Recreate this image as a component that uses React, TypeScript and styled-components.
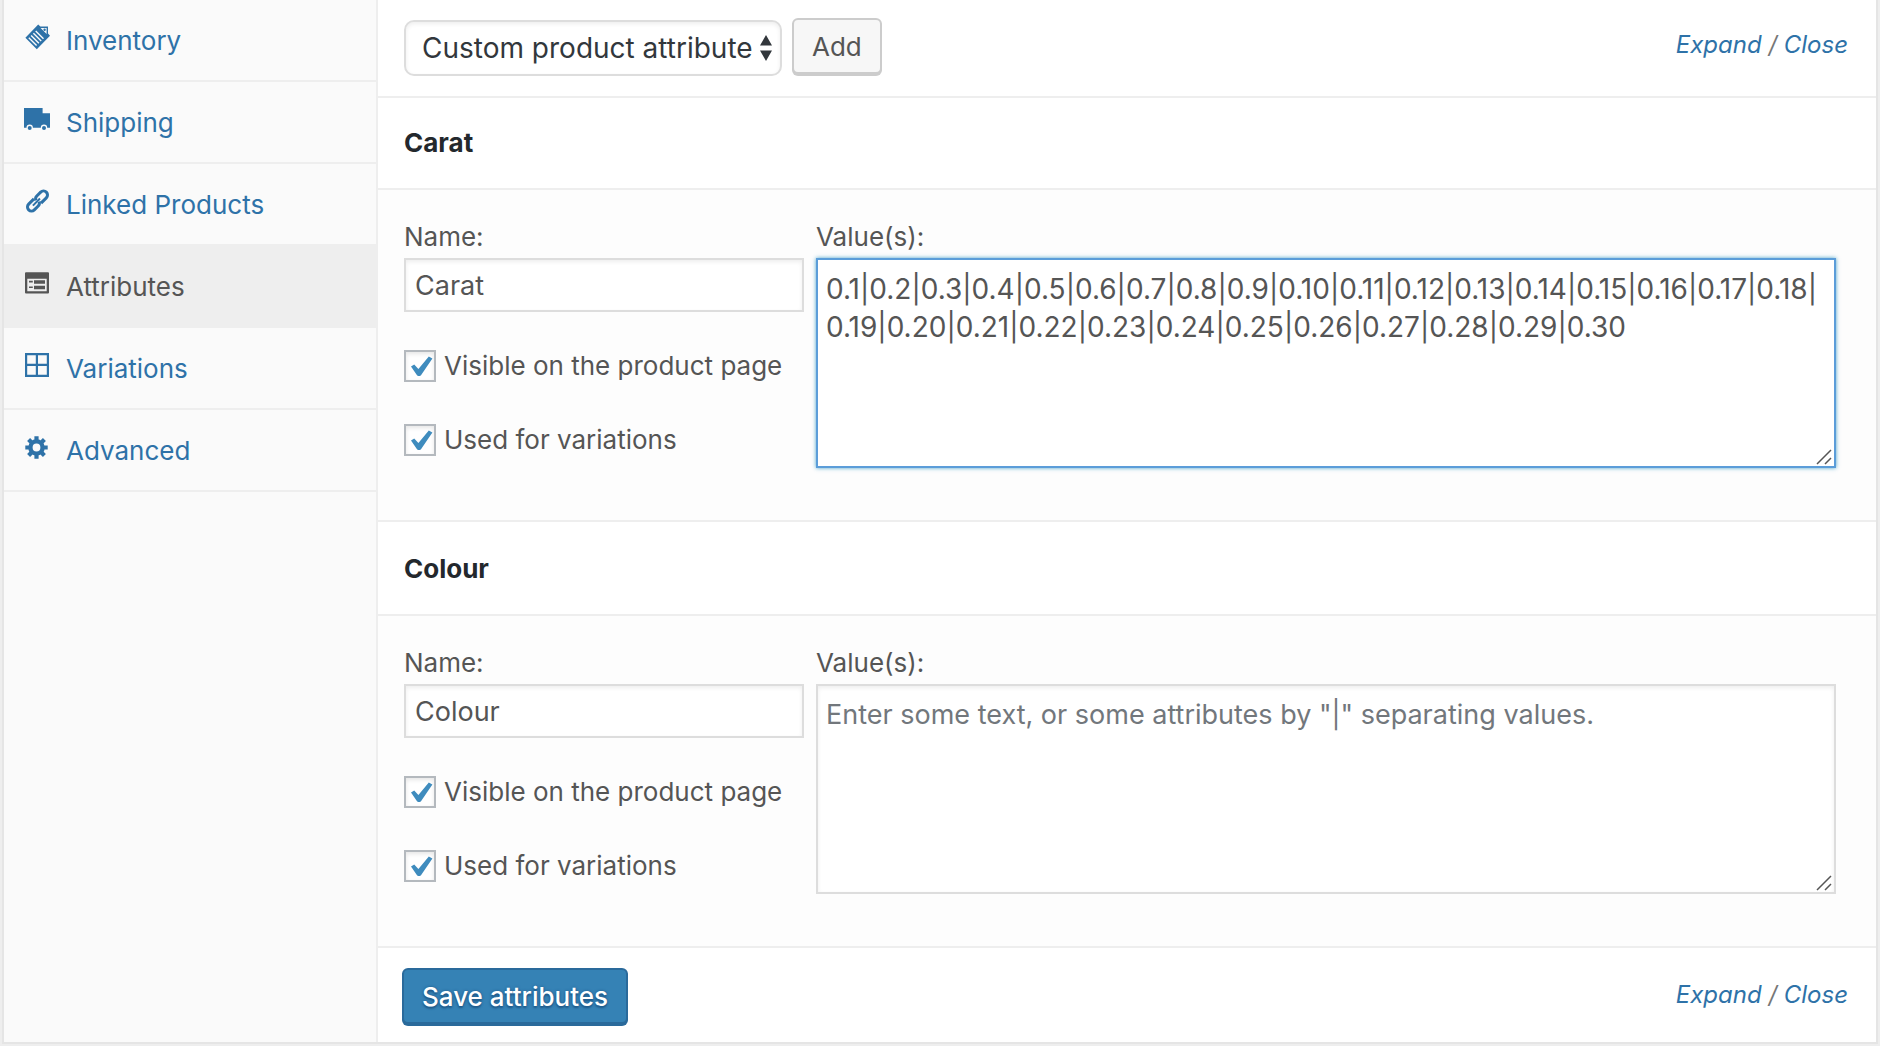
import React, { useId, useState } from 'react';
import styled, { createGlobalStyle } from 'styled-components';

const GlobalStyle = createGlobalStyle`
  *, *::before, *::after { box-sizing: border-box; }
  body {
    margin: 0;
    background: #eeeeee;
    color: #555555;
    font-family: Inter, "Liberation Sans", sans-serif;
    font-size: 26px;
  }
  h3, p, ul { margin: 0; padding: 0; }
`;

const Panel = styled.div`
  display: flex;
  margin: 0 2px 2px;
  border: solid #e5e5e5;
  border-width: 0 2px 2px;
  background: #ffffff;
`;

const Tabs = styled.nav`
  flex: 0 0 374px;
  background: #fafafa;
  border-right: 2px solid #eeeeee;
`;

const TabList = styled.ul`
  list-style: none;
`;

const Tab = styled.li<{ $active?: boolean }>`
  border-bottom: 2px solid #eeeeee;
  background: ${p => (p.$active ? '#eeeeee' : 'transparent')};
  margin-right: ${p => (p.$active ? '-2px' : '0')};
`;

const TabLink = styled.a<{ $active?: boolean }>`
  display: flex;
  align-items: center;
  gap: 16px;
  height: 80px;
  padding: 0 20px;
  color: ${p => (p.$active ? '#555555' : '#2e72a8')};
  text-decoration: none;
`;

const TabIcon = styled.svg`
  flex: none;
  width: 26px;
  height: 26px;
  margin-bottom: 6px;
  fill: currentColor;
`;

const Content = styled.main`
  flex: 1;
  min-width: 0;
`;

const Toolbar = styled.div`
  display: flex;
  align-items: center;
  gap: 10px;
  padding: 18px 28px 20px 26px;
`;

const TopBar = styled(Toolbar)`
  border-bottom: 2px solid #eeeeee;
`;

const BottomBar = styled(Toolbar)`
  padding: 20px 28px 16px 24px;
`;

const SelectBox = styled.div`
  position: relative;
  margin-top: 2px;
`;

const Select = styled.select`
  appearance: none;
  display: block;
  width: 378px;
  height: 56px;
  padding: 0 16px;
  border: 2px solid #dddddd;
  border-radius: 10px;
  background: #ffffff;
  box-shadow: inset 0 2px 4px rgba(0, 0, 0, 0.07);
  color: #32373c;
  font: inherit;
  font-size: 28px;
`;

const SelectArrows = styled.svg`
  position: absolute;
  top: 15px;
  right: 9px;
  width: 14px;
  height: 26px;
  fill: #32373c;
  pointer-events: none;
`;

const Button = styled.button<{ $primary?: boolean }>`
  height: 56px;
  margin-bottom: 2px;
  padding: 0 18px;
  border: 2px solid ${p => (p.$primary ? '#2a6a9b' : '#cccccc')};
  border-radius: 6px;
  background: ${p => (p.$primary ? '#3582b5' : '#f7f7f7')};
  box-shadow: 0 2px 0 ${p => (p.$primary ? '#2a6a9b' : '#cccccc')};
  color: ${p => (p.$primary ? '#ffffff' : '#555555')};
  font: inherit;
  font-weight: ${p => (p.$primary ? 500 : 400)};
  text-shadow: ${p => (p.$primary ? '0 0 3px #1f5a8a, 0 2px 2px #1f5a8a' : 'none')};
`;

const Toggle = styled.p`
  margin: 0 0 4px auto;
  font-size: 24px;
  font-style: italic;
  line-height: 32px;
  color: #777777;
`;

const ToggleLink = styled.a`
  color: #2e72a8;
  text-decoration: none;
`;

const Attribute = styled.section`
  border-bottom: 2px solid #eeeeee;
  & + & { padding-top: 2px; }
`;

const AttributeTitle = styled.h3`
  padding: 0 26px;
  border-bottom: 2px solid #eeeeee;
  color: #23282d;
  font-size: 26px;
  font-weight: 700;
  line-height: 90px;
`;

const AttributeBody = styled.div`
  display: grid;
  grid-template-columns: minmax(0, 20fr) minmax(0, 51fr);
  column-gap: 12px;
  padding: 26px 40px 52px 26px;
  background: #fdfdfd;
`;

const Label = styled.label`
  display: block;
  line-height: 42px;
`;

const TextInput = styled.input`
  display: block;
  width: 100%;
  height: 54px;
  padding: 0 9px;
  border: 2px solid #dddddd;
  background: #ffffff;
  box-shadow: inset 0 2px 4px rgba(0, 0, 0, 0.07);
  color: #555555;
  font: inherit;
  font-size: 27px;
`;

const Checks = styled.div`
  display: grid;
  gap: 38px;
  padding-top: 36px;
`;

const CheckRow = styled.div`
  display: flex;
  align-items: center;
  gap: 8px;
  line-height: 36px;
`;

const CheckBox = styled.span`
  position: relative;
  flex: none;
  width: 32px;
  height: 32px;
`;

const CheckInput = styled.input`
  appearance: none;
  display: block;
  width: 32px;
  height: 32px;
  margin: 0;
  border: 2px solid #b4b9be;
  background: #ffffff;
  box-shadow: inset 0 2px 4px rgba(0, 0, 0, 0.1);
`;

const CheckMark = styled.svg`
  position: absolute;
  inset: 0;
  fill: #3f8cbe;
  pointer-events: none;
`;

const AreaBox = styled.div`
  position: relative;
`;

const TextArea = styled.textarea<{ $active?: boolean }>`
  display: block;
  width: 100%;
  height: 210px;
  padding: 10px 8px;
  overflow: hidden;
  resize: none;
  border: 2px solid ${p => (p.$active ? '#5b9dd9' : '#dddddd')};
  background: #ffffff;
  box-shadow: ${p => (p.$active ? '0 0 4px rgba(30, 140, 190, 0.8)' : 'inset 0 2px 4px rgba(0, 0, 0, 0.07)')};
  color: #555555;
  font: inherit;
  font-size: 28px;
  line-height: 38px;
  &::placeholder { color: #72777c; font-size: 27px; opacity: 1; }
`;

const Grip = styled.svg`
  position: absolute;
  right: 4px;
  bottom: 3px;
  width: 16px;
  height: 16px;
  fill: none;
  stroke: #555555;
  stroke-width: 1.5;
  pointer-events: none;
`;

const icons: Record<string, React.ReactNode> = {
  Inventory: (
    <>
      <path fillRule="evenodd" d="M14.2 0.5 L16.4 2.4 H24 V9.6 L26 11.8 L12.8 25.2 L1.4 13.8 Z M16.6 4 L22.6 10 V4 Z" />
      <circle cx="20.6" cy="5.8" r="1.2" />
      <path
        stroke="#fafafa"
        strokeWidth="1.4"
        fill="none"
        d="M4.8 13.8 L12.6 21.6 M7.1 11.5 L14.9 19.3 M9.4 9.2 L17.2 17 M11.7 6.9 L19.5 14.7"
      />
    </>
  ),
  Shipping: (
    <>
      <path d="M0 2 H18.6 V7.2 H26 V21.7 H23.2 A3.2 3.2 0 0 0 16.8 21.7 H8.9 A3.2 3.2 0 0 0 2.5 21.7 H0 Z" />
      <circle cx="5.7" cy="22" r="2" />
      <circle cx="20" cy="22" r="2" />
    </>
  ),
  'Linked Products': (
    <g transform="rotate(-45 13.5 13)" fill="none" stroke="currentColor" strokeWidth="3">
      <path d="M17 13 H7" strokeWidth="2" />
      <path d="M12.5 9 H5 A4 4 0 0 0 5 17 H10.5 A4 4 0 0 0 14.2 14.5" />
      <path d="M14.5 17 H22 A4 4 0 0 0 22 9 H16.5 A4 4 0 0 0 12.8 11.5" />
    </g>
  ),
  Attributes: (
    <>
      <path fillRule="evenodd" d="M2 2.3 H24 Q25 2.3 25 3.3 V22.5 Q25 23.5 24 23.5 H2 Q1 23.5 1 22.5 V3.3 Q1 2.3 2 2.3 Z M3.3 8.8 V21.3 H22.7 V8.8 Z" />
      <path d="M10 10.3 H21 V13.8 H10 Z M10 15.8 H21 V19.2 H10 Z M5 10.8 H8.8 V12.4 H5 Z M5 16.5 H8.8 V18.1 H5 Z" />
    </>
  ),
  Variations: (
    <path fillRule="evenodd" d="M1 1 H25 V25 H1 Z M3.2 3.2 V11.8 H11.8 V3.2 Z M14 3.2 V11.8 H22.8 V3.2 Z M3.2 14 V22.8 H11.8 V14 Z M14 14 V22.8 H22.8 V14 Z" />
  ),
  Advanced: (
    <g fill="none" stroke="currentColor">
      <circle cx="12.5" cy="13.5" r="6.1" strokeWidth="4.4" />
      <path
        strokeWidth="4.2"
        d="M12.5 2.3 V6 M12.5 21 V24.7 M1.3 13.5 H5 M20 13.5 H23.7 M4.6 5.6 L7.3 8.3 M17.7 18.7 L20.4 21.4 M20.4 5.6 L17.7 8.3 M7.3 18.7 L4.6 21.4"
      />
    </g>
  ),
};

const tabs = ['Inventory', 'Shipping', 'Linked Products', 'Attributes', 'Variations', 'Advanced'];

const caratValues = Array.from({ length: 30 }, (_, i) => `0.${i + 1}`).join('|');

function ExpandClose() {
  return (
    <Toggle>
      <ToggleLink href="#expand">Expand</ToggleLink> / <ToggleLink href="#close">Close</ToggleLink>
    </Toggle>
  );
}

function Check({ label }: { label: string }) {
  const id = useId();
  const [checked, setChecked] = useState(true);
  return (
    <CheckRow>
      <CheckBox>
        <CheckInput id={id} type="checkbox" checked={checked} onChange={e => setChecked(e.target.checked)} />
        {checked && (
          <CheckMark width="32" height="32" viewBox="0 0 32 32" aria-hidden="true">
            <path d="M7 16.5 L10.2 14.4 L14.4 19 L24.8 6.6 L28.4 8.6 L17 25.2 Q15 27 13 25.2 Z" />
          </CheckMark>
        )}
      </CheckBox>
      <label htmlFor={id}>{label}</label>
    </CheckRow>
  );
}

function AttributeSection({ name, values, active }: { name: string; values: string; active?: boolean }) {
  const id = useId();
  return (
    <Attribute>
      <AttributeTitle>{name}</AttributeTitle>
      <AttributeBody>
        <div>
          <Label htmlFor={`${id}-name`}>Name:</Label>
          <TextInput id={`${id}-name`} type="text" defaultValue={name} />
          <Checks>
            <Check label="Visible on the product page" />
            <Check label="Used for variations" />
          </Checks>
        </div>
        <div>
          <Label htmlFor={`${id}-values`}>Value(s):</Label>
          <AreaBox>
            <TextArea
              id={`${id}-values`}
              $active={active}
              defaultValue={values}
              placeholder={'Enter some text, or some attributes by "|" separating values.'}
            />
            <Grip viewBox="0 0 16 16" aria-hidden="true">
              <path d="M1 15 L15 1 M9 15 L15 9" />
            </Grip>
          </AreaBox>
        </div>
      </AttributeBody>
    </Attribute>
  );
}

export default function App() {
  return (
    <>
      <GlobalStyle />
      <Panel>
        <Tabs aria-label="Product data">
          <TabList>
            {tabs.map(tab => (
              <Tab key={tab} $active={tab === 'Attributes'}>
                <TabLink href={`#${tab.toLowerCase().replace(' ', '-')}`} $active={tab === 'Attributes'}>
                  <TabIcon viewBox="0 0 26 26" aria-hidden="true">{icons[tab]}</TabIcon>
                  <span>{tab}</span>
                </TabLink>
              </Tab>
            ))}
          </TabList>
        </Tabs>
        <Content>
          <TopBar>
            <SelectBox>
              <Select aria-label="Attribute type" defaultValue="custom">
                <option value="custom">Custom product attribute</option>
              </Select>
              <SelectArrows viewBox="0 0 14 26" aria-hidden="true">
                <path d="M7 0 L13 10.5 H1 Z M7 26 L13 15.5 H1 Z" />
              </SelectArrows>
            </SelectBox>
            <Button type="button">Add</Button>
            <ExpandClose />
          </TopBar>
          <AttributeSection name="Carat" values={caratValues} active />
          <AttributeSection name="Colour" values="" />
          <BottomBar>
            <Button type="button" $primary>Save attributes</Button>
            <ExpandClose />
          </BottomBar>
        </Content>
      </Panel>
    </>
  );
}
